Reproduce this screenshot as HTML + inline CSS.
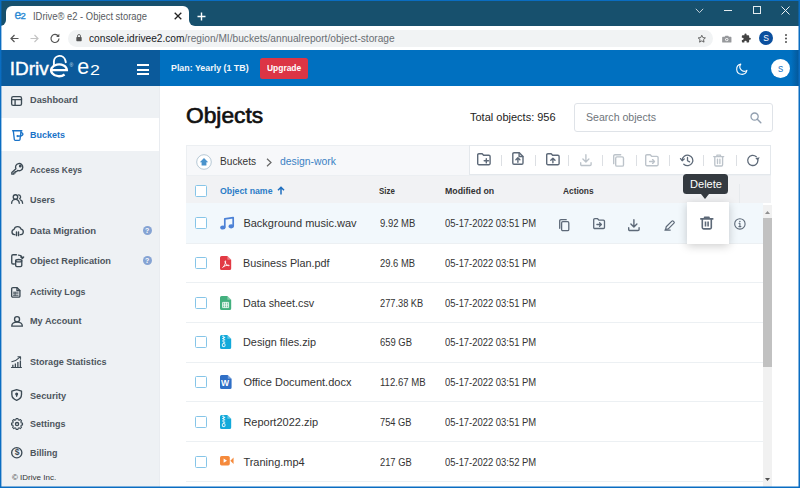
<!DOCTYPE html>
<html><head><meta charset="utf-8"><title>IDrive e2 - Object storage</title>
<style>
*{box-sizing:border-box;margin:0;padding:0}
html,body{width:800px;height:488px;overflow:hidden;background:#fff}
body{position:relative;font-family:"Liberation Sans","DejaVu Sans",sans-serif;color:#333;font-size:12px}
.a{position:absolute}
.t{position:absolute;white-space:pre;line-height:1;transform-origin:0 50%}
svg{position:absolute;overflow:visible}
.cb{position:absolute;left:195px;width:12px;height:12px;border:1px solid #86c5e8;border-radius:1.5px;background:#fff}
.rl{position:absolute;left:186px;width:577px;height:1px;background:#ecf0f3}
.sep{position:absolute;top:155px;width:1px;height:11px;background:#dcdfe3}
.ni{stroke:#3c4a54;stroke-width:1.45;fill:none;stroke-linecap:round;stroke-linejoin:round}
.ti{stroke:#5d6978;stroke-width:1.4;fill:none;stroke-linecap:round;stroke-linejoin:round}
.tg{stroke:#bcc3ca;stroke-width:1.35;fill:none;stroke-linecap:round;stroke-linejoin:round}
</style></head><body>

<!-- browser chrome -->
<div class="a" style="left:0;top:0;width:800px;height:26px;background:#17506d"></div>
<div class="a" style="left:6px;top:5.500px;width:182.500px;height:21.500px;background:#fff;border-radius:6px 6px 0 0"></div>
<div class="a" style="left:0;top:20px;width:6px;height:6px;background:#fff"></div>
<div class="a" style="left:-6px;top:14px;width:12px;height:12px;background:#17506d;border-radius:0 0 6px 0"></div>
<div class="a" style="left:188.500px;top:20px;width:6px;height:6px;background:#fff"></div>
<div class="a" style="left:188.500px;top:14px;width:12px;height:12px;background:#17506d;border-radius:0 0 0 6px"></div>
<div class="t" style="left:14.400px;top:9.400px;font-size:12px;color:#2a8ad4;-webkit-text-stroke:.35px #2a8ad4">e</div><div class="t" style="left:20.600px;top:11.200px;font-size:9.500px;color:#2a8ad4;-webkit-text-stroke:.35px #2a8ad4">2</div>
<svg style="left:174px;top:12px" width="8" height="8" viewBox="0 0 8 8"><path d="M0.7 0.7L7.3 7.3M7.3 0.7L0.7 7.3" stroke="#222" stroke-width="1.3" fill="none"/></svg>
<svg style="left:197px;top:11.5px" width="9" height="9" viewBox="0 0 9 9"><path d="M4.5 0.5V8.5M0.5 4.5H8.5" stroke="#fff" stroke-width="1.4" fill="none"/></svg>
<!-- window controls -->
<svg style="left:695px;top:7.5px" width="9" height="6" viewBox="0 0 9 6"><path d="M0.8 0.8L4.5 4.6L8.2 0.8" stroke="#c5d3dc" stroke-width="1" fill="none"/></svg>
<div class="a" style="left:724px;top:9.500px;width:8px;height:1px;background:#e4ebef"></div>
<div class="a" style="left:753px;top:6px;width:8px;height:8px;border:1px solid #e4ebef"></div>
<svg style="left:781px;top:6px" width="9" height="9" viewBox="0 0 9 9"><path d="M0.500 0.500L8.500 8.500M8.500 0.500L0.500 8.500" stroke="#eef3f6" stroke-width="1" fill="none"/></svg>

<div class="a" style="left:0;top:26px;width:800px;height:24px;background:#fff"></div>
<div class="a" style="left:68px;top:30px;width:644.500px;height:17px;border-radius:8.500px;background:#f1f3f4"></div>
<svg style="left:10px;top:34px" width="9" height="9" viewBox="0 0 9 9"><path d="M8.5 4.5H1M4.5 1L1 4.5L4.5 8" stroke="#555" stroke-width="1.2" fill="none"/></svg>
<svg style="left:30px;top:34px" width="9" height="9" viewBox="0 0 9 9"><path d="M0.5 4.5H8M4.5 1L8 4.5L4.5 8" stroke="#c4c4c4" stroke-width="1.2" fill="none"/></svg>
<svg style="left:50px;top:33px" width="10" height="10" viewBox="0 0 10 10"><path d="M8.3 3.2A4 4 0 1 0 9 5.6" stroke="#555" stroke-width="1.2" fill="none"/><path d="M9.3 0.8V4H6.1Z" fill="#555"/></svg>
<svg style="left:76.200px;top:34.300px" width="6" height="7.500" viewBox="0 0 7 9"><rect x="0.3" y="3.6" width="6.4" height="5" rx="0.8" fill="#555"/><path d="M1.7 4V2.4a1.8 1.8 0 0 1 3.6 0V4" stroke="#555" stroke-width="1" fill="none"/></svg>
<svg style="left:696.700px;top:33.500px" width="9.600" height="9.600" viewBox="0 0 24 24"><path d="M12 3.2l2.7 5.8 6.3.8-4.7 4.3 1.3 6.3L12 17.2 6.4 20.4l1.3-6.3L3 9.8l6.3-.8z" stroke="#444" stroke-width="2" fill="none" stroke-linejoin="round"/></svg>
<svg style="left:721.700px;top:34.600px" width="9.600" height="8" viewBox="0 0 12 10"><path d="M1 2.2h2.3l1-1.4h3.4l1 1.4H11a.8.8 0 0 1 .8.8v5.6a.8.8 0 0 1-.8.8H1a.8.8 0 0 1-.8-.8V3a.8.8 0 0 1 .8-.8z" fill="#97999c"/><circle cx="6" cy="5.7" r="2" fill="#fff"/><circle cx="6" cy="5.7" r="1.1" fill="#97999c"/></svg>
<svg style="left:741.300px;top:33.300px" width="10.300" height="10.300" viewBox="0 0 24 24"><path d="M20.5 11H19V7a2 2 0 0 0-2-2h-4V3.5a2.5 2.5 0 0 0-5 0V5H4a2 2 0 0 0-2 2v3.8h1.5a2.7 2.7 0 0 1 0 5.4H2V20a2 2 0 0 0 2 2h3.8v-1.5a2.7 2.7 0 0 1 5.4 0V22H17a2 2 0 0 0 2-2v-4h1.5a2.5 2.5 0 0 0 0-5z" fill="#444"/></svg>
<div class="a" style="left:759px;top:31px;width:14px;height:14px;border-radius:7px;background:#0b4f9e"></div>
<div class="t" style="left:763.2px;top:33.8px;font-size:8.5px;color:#fff">S</div>
<svg style="left:785.300px;top:33.900px" width="2" height="9" viewBox="0 0 2 9"><circle cx="1" cy="1" r=".95" fill="#444"/><circle cx="1" cy="4.500" r=".95" fill="#444"/><circle cx="1" cy="8" r=".95" fill="#444"/></svg>

<!-- app header -->
<div class="a" style="left:0;top:49.5px;width:160px;height:36.5px;background:#0b5a9b"></div>
<div class="a" style="left:160px;top:49.5px;width:640px;height:36.5px;background:#0070c0"></div>
<div class="a" style="left:791px;top:49.500px;width:9px;height:36.500px;background:linear-gradient(90deg,rgba(9,60,110,0),rgba(9,60,110,.55))"></div>
<div class="t" style="left:9.8px;top:58.6px;font-size:19px;color:#fff;-webkit-text-stroke:0.45px #fff">IDriv</div>
<svg style="left:49px;top:54px" width="21" height="24" viewBox="0 0 21 24"><path d="M4.900 11.500V7.300A5.800 5.800 0 0 1 16.300 6.200L16.800 8.200" stroke="#fff" stroke-width="1.900" fill="none" stroke-linecap="round"/><path d="M2.300 16.200H17.900A7.900 5.900 0 1 0 15.600 20.500" stroke="#fff" stroke-width="2.300" fill="none"/></svg>
<div class="t" style="left:69.5px;top:63px;font-size:5px;color:#cfe0ee">®</div>
<div class="t" style="left:77.3px;top:57.300px;font-size:21.500px;color:#fff">e</div>
<div class="t" style="left:89.8px;top:62px;font-size:15.500px;color:#fff;transform:scaleX(1.150)">2</div>
<div class="a" style="left:137px;top:64px;width:12px;height:2px;background:#fff"></div>
<div class="a" style="left:137px;top:68.5px;width:12px;height:2px;background:#fff"></div>
<div class="a" style="left:137px;top:73px;width:12px;height:2px;background:#fff"></div>
<div class="a" style="left:260px;top:58px;width:48px;height:20.700px;background:#dc3545;border-radius:2.500px"></div>
<svg style="left:736px;top:63.200px" width="12" height="12" viewBox="0 0 13 13"><path d="M5.2 1.2A5.6 5.6 0 1 0 11.8 8 4.8 4.8 0 0 1 5.2 1.2z" stroke="#fff" stroke-width="1.2" fill="none" stroke-linejoin="round"/></svg>
<div class="a" style="left:771px;top:59px;width:19px;height:19px;border-radius:10px;background:#fff"></div>
<div class="t" style="left:778px;top:62.5px;font-size:10.5px;color:#1f78c6">s</div>

<!-- sidebar -->
<div class="a" style="left:0;top:86px;width:160px;height:402px;background:#eef1f4"></div>
<div class="a" style="left:0;top:118.3px;width:160px;height:33.2px;background:#fff"></div>
<div class="a" style="left:159px;top:86px;width:1px;height:402px;background:#e9ecf0"></div>
<svg class="ni" style="left:11.42px;top:95.89px" width="11.16" height="10.23" viewBox="0 0 12 11"><rect x=".7" y=".7" width="10.6" height="9.4" rx="1.6"/><path d="M.7 3.9h10.6M4.4 3.9v6.2"/></svg>
<svg class="ni" style="left:11.76px;top:130.42px;stroke:#1a73c8" width="12.09" height="11.16" viewBox="0 0 13 12"><path d="M.7 .8H10.6M1.4 .8L2.5 10.2a1 1 0 0 0 1 .9H7.6a1 1 0 0 0 1-.9L9.8 .8"/><path d="M9.7 2.9C13 3.2 12.6 6.8 6.3 6.6"/><circle cx="6" cy="6.5" r=".5"/></svg>
<svg class="ni" style="left:11.47px;top:163.44px" width="12.56" height="11.62" viewBox="0 0 13.5 12.5"><path d="M5.3 6.2L.9 10.3V12H3V10.7H4.4V9.3H5.8L7.2 8A3.9 3.9 0 1 0 5.3 6.2Z"/><circle cx="10" cy="3.400" r=".8"/></svg>
<svg class="ni" style="left:11.26px;top:194.37px" width="12.28" height="9.86" viewBox="0 0 13.2 10.6"><circle cx="4.8" cy="3.2" r="2.4"/><path d="M.7 9.9a4.1 4.1 0 0 1 8.2 0"/><path d="M8.1 .9a2.3 2.3 0 0 1 1.2 4.2M10.2 6.4a3.8 3.8 0 0 1 2.3 3.5"/></svg>
<svg class="ni" style="left:11.19px;top:225.58px" width="13.02" height="10.23" viewBox="0 0 14 11"><path d="M4.2 9.3H3.6A2.9 2.9 0 0 1 3.3 3.6 4 4 0 0 1 10.9 3.4 3 3 0 0 1 10.6 9.3H9.8"/><path d="M5.9 6.4v4M8.1 6.4v4" stroke-width="1.5"/></svg>
<svg class="ni" style="left:11.49px;top:254.31px" width="13.02" height="13.49" viewBox="0 0 14 14.5"><path d="M5.8 .8H2.2A1.4 1.4 0 0 0 .8 2.2V9.4a1.4 1.4 0 0 0 1.4 1.4H3.6"/><path d="M5 7.2v5.1c0 1.8 6.6 1.8 6.6 0V7.2"/><ellipse cx="8.3" cy="7.2" rx="3.3" ry="1.3"/><path d="M8 1.2c2.5 0 4 1.200 4.200 3.500M10.600 3.300l1.600 1.600 1.400-1.700"/></svg>
<svg class="ni" style="left:11.37px;top:287.40px" width="9.77" height="10.70" viewBox="0 0 10.5 11.5"><path d="M2 .7H6.600L9.600 3.700V9.600a1.300 1.300 0 0 1-1.300 1.300H2A1.300 1.300 0 0 1 .7 9.600V2A1.300 1.300 0 0 1 2 .7Z"/><path d="M6.400 .9V3.900H9.400"/><path d="M2.600 5.600H7.700M2.600 7.300H7.700M2.600 9H7.700M4.400 5.600V9" stroke-width=".9"/></svg>
<svg class="ni" style="left:11.16px;top:315.71px" width="12.28" height="10.97" viewBox="0 0 13.2 11.8"><circle cx="6.500" cy="3.400" r="2.700"/><path d="M.8 10.900c0-3.100 2.400-4.300 5.700-4.300s5.700 1.200 5.700 4.300Z"/></svg>
<svg class="ni" style="left:11.12px;top:356.26px" width="11.16" height="12.28" viewBox="0 0 12 13.2"><path d="M.5 12.400H11.300" stroke-width="1.100"/><path d="M2 11.800V9.500M4.700 11.800V8M7.400 11.800V6.500M10.100 11.800V4.800" stroke-width="1.400" stroke-linecap="butt"/><path d="M.8 6.100C4.200 5.600 7.300 3.600 10 .9M7.400 .7h2.900v2.900" stroke-width="1.100"/></svg>
<svg class="ni" style="left:11.13px;top:389.45px" width="11.35" height="12.09" viewBox="0 0 12.2 13"><path d="M6.100 .7L11.300 2.300V5.900c0 3.400-2.500 5.300-5.200 6.300C3.400 11.200 .9 9.300 .9 5.900V2.300Z"/><circle cx="6.100" cy="5.300" r=".9" fill="#3c4a54"/><path d="M6.100 5.500V7.800" stroke-width="1.400"/></svg>
<svg class="ni" style="left:10.96px;top:417.65px" width="12.09" height="12.09" viewBox="0 0 13 13"><path d="M12.41 5.47L12.41 7.53L11.05 7.67L10.55 8.89L11.41 9.95L9.95 11.41L8.89 10.55L7.67 11.05L7.53 12.41L5.47 12.41L5.33 11.05L4.11 10.55L3.05 11.41L1.59 9.95L2.45 8.89L1.95 7.67L0.59 7.53L0.59 5.47L1.95 5.33L2.45 4.11L1.59 3.05L3.05 1.59L4.11 2.45L5.33 1.95L5.47 0.59L7.53 0.59L7.67 1.95L8.89 2.45L9.95 1.59L11.41 3.05L10.55 4.11L11.05 5.33Z" stroke-width="1.150"/><circle cx="6.500" cy="6.500" r="1.700"/></svg>
<svg class="ni" style="left:11.23px;top:446.63px" width="11.53" height="11.53" viewBox="0 0 12.4 12.4"><circle cx="6.200" cy="6.200" r="5.500"/></svg>
<div class="t" style="left:14.650px;top:448.200px;font-size:8.500px;font-weight:bold;color:#3c4a54">$</div>
<div class="a" style="left:142.5px;top:225.5px;width:9px;height:9px;border-radius:5px;background:#85a3d3"></div>
<div class="t" style="left:145.1px;top:226.6px;font-size:7px;font-weight:bold;color:#fff">?</div>
<div class="a" style="left:142.5px;top:256.3px;width:9px;height:9px;border-radius:5px;background:#85a3d3"></div>
<div class="t" style="left:145.1px;top:257.4px;font-size:7px;font-weight:bold;color:#fff">?</div>

<!-- main -->
<div class="a" style="left:573.5px;top:103px;width:199px;height:28.5px;border:1px solid #dfe3e8;border-radius:3px;background:#fff"></div>
<svg style="left:750px;top:111.5px" width="12" height="12" viewBox="0 0 12 12"><circle cx="4.6" cy="4.6" r="3.6" stroke="#93a0b0" stroke-width="1.300" fill="none"/><path d="M7.300 7.300L10.800 10.800" stroke="#93a0b0" stroke-width="1.500" stroke-linecap="round"/></svg>

<!-- panel -->
<div class="a" style="left:186px;top:145px;width:585px;height:31px;background:#f7f8fa;border:1px solid #eceff2"></div>
<div class="a" style="left:468.500px;top:145px;width:302.500px;height:30px;background:#fff;border:1px solid #e4e8ec"></div>
<div class="a" style="left:186px;top:175.500px;width:585px;height:27.500px;background:#f1f2f4"></div>
<div class="a" style="left:739px;top:184px;width:1px;height:19px;background:#e7eaed"></div>
<div class="a" style="left:186px;top:203px;width:577px;height:40px;background:#f2f8fc"></div>

<svg style="left:196px;top:154px" width="16" height="16" viewBox="0 0 16 16"><circle cx="8" cy="8" r="7.3" stroke="#b7c9d6" stroke-width="1" fill="#fff"/><path d="M8 4L3.8 8.2H5.6V11.6H10.4V8.2H12.2Z" fill="#4a93cc"/></svg>
<svg style="left:266px;top:157.5px" width="6" height="9" viewBox="0 0 6 9"><path d="M1 0.8L5 4.5L1 8.2" stroke="#666" stroke-width="1.2" fill="none"/></svg>
<svg class="ti" style="left:477.3px;top:152.7px" width="14" height="12.5" viewBox="0 0 14 12.5"><path d="M.7 1.900A1.200 1.200 0 0 1 1.900 .7H5.200L6.600 2.300H11.900A1.200 1.200 0 0 1 13.100 3.500V10.500A1.200 1.200 0 0 1 11.900 11.700H1.900A1.200 1.200 0 0 1 .7 10.500Z"/><path d="M9.300 5.700V9.900M7.200 7.800H11.400"/></svg>
<svg class="ti" style="left:511.5px;top:152.3px" width="12" height="13" viewBox="0 0 12 13"><path d="M2 .7H7.300L11 4.400V11a1.200 1.200 0 0 1-1.200 1.200H2A1.200 1.200 0 0 1 .8 11V1.900A1.200 1.200 0 0 1 2 .7Z"/><path d="M7.100 .9V4.500H10.800"/><path d="M5.900 10.300V5.900M3.900 7.800L5.900 5.800 7.900 7.800"/></svg>
<svg class="ti" style="left:545.5px;top:152.7px" width="14" height="12.5" viewBox="0 0 14 12.5"><path d="M.7 1.900A1.200 1.200 0 0 1 1.900 .7H5.200L6.600 2.300H11.900A1.200 1.200 0 0 1 13.100 3.500V10.500A1.200 1.200 0 0 1 11.900 11.700H1.900A1.200 1.200 0 0 1 .7 10.500Z"/><path d="M6.900 9.800V5.300M4.800 7.300L6.900 5.200 9 7.300"/></svg>
<svg class="tg" style="left:579.5px;top:153.6px" width="11.8" height="12.2" viewBox="0 0 11.8 12.2"><path d="M5.900 .7V7.800M2.900 5L5.900 8 8.900 5"/><path d="M.7 8.800V10.400A1.100 1.100 0 0 0 1.800 11.500H10A1.100 1.100 0 0 0 11.100 10.400V8.800"/></svg>
<svg class="tg" style="left:612.8px;top:154.4px" width="11.2" height="13" viewBox="0 0 11.2 13"><rect x="2.700" y="2.900" width="7.800" height="9.300" rx="1.300"/><path d="M.7 9.700V2A1.300 1.300 0 0 1 2 .7H7.700"/></svg>
<svg class="tg" style="left:645.4px;top:154.2px" width="14" height="12.5" viewBox="0 0 14 12.5"><path d="M.7 1.900A1.200 1.200 0 0 1 1.900 .7H5.200L6.600 2.300H11.900A1.200 1.200 0 0 1 13.100 3.500V10.500A1.200 1.200 0 0 1 11.900 11.700H1.900A1.200 1.200 0 0 1 .7 10.500Z"/><path d="M4.600 7.500H9.400M7.600 5.600L9.500 7.500 7.600 9.400"/></svg>
<svg class="ti" style="left:679.5px;top:154.2px;stroke-width:1.3" width="13.5" height="12.8" viewBox="0 0 13.5 12.8"><path d="M2.200 6.400A5.300 5.300 0 1 1 3.800 10.200" /><path d="M.5 4.600L2.200 6.700 4.200 4.900" /><path d="M7.500 3.500V6.700L9.600 7.900"/></svg>
<svg class="tg" style="left:713px;top:154.2px" width="11.4" height="12.7" viewBox="0 0 11.4 12.7"><path d="M.7 2.600H10.700M3.900 2.400V1.200H7.500V2.400"/><path d="M1.800 2.800V10.800A1.200 1.200 0 0 0 3 12H8.400A1.200 1.200 0 0 0 9.600 10.800V2.800"/><path d="M4.500 5.200V9.600M6.900 5.200V9.600"/></svg>
<svg class="ti" style="left:747.2px;top:154.2px;stroke-width:1.3" width="13.2" height="12.8" viewBox="0 0 13.2 12.8"><path d="M10.900 6.400A5.100 5.100 0 1 1 9.300 2.700"/><path d="M12.700 3.200L11 6.800 8.300 4.300Z" fill="#5d6978" stroke="none"/></svg>
<div class="sep" style="left:501px"></div><div class="sep" style="left:535px"></div><div class="sep" style="left:568px"></div><div class="sep" style="left:602px"></div><div class="sep" style="left:635.5px"></div><div class="sep" style="left:669px"></div><div class="sep" style="left:702.5px"></div><div class="sep" style="left:736px"></div>

<div class="cb" style="top:184.5px"></div>
<svg style="left:277px;top:185.5px" width="8" height="9" viewBox="0 0 8 9"><path d="M4 8.5V1.5M1 4.2L4 1.2L7 4.2" stroke="#1f6fbf" stroke-width="1.5" fill="none"/></svg>

<!-- rows -->
<div class="cb" style="top:217px"></div>
<div class="rl" style="top:243px"></div>
<div class="cb" style="top:256.8px"></div>
<div class="rl" style="top:282px"></div>
<div class="cb" style="top:296.5px"></div>
<div class="rl" style="top:322px"></div>
<div class="cb" style="top:336.2px"></div>
<div class="rl" style="top:362px"></div>
<div class="cb" style="top:376px"></div>
<div class="rl" style="top:401px"></div>
<div class="cb" style="top:415.7px"></div>
<div class="rl" style="top:441px"></div>
<div class="cb" style="top:455.5px"></div>
<div class="rl" style="top:481px"></div>
<svg style="left:219.6px;top:216.9px" width="14.8" height="13.4" viewBox="0 0 14.8 13.4"><path d="M4.800 10.200V1.800L13.200 .6V9" stroke="#4d82d6" stroke-width="1.700" fill="none" stroke-linejoin="round"/><ellipse cx="2.900" cy="10.500" rx="2.700" ry="2.100" fill="#4d82d6"/><ellipse cx="11.300" cy="9.300" rx="2.700" ry="2.100" fill="#4d82d6"/></svg>
<svg style="left:220.1px;top:256px" width="11.2" height="14" viewBox="0 0 11.2 14"><path d="M1.600 0H7.400L11.200 3.800V12.400A1.600 1.600 0 0 1 9.600 14H1.600A1.600 1.600 0 0 1 0 12.400V1.600A1.600 1.600 0 0 1 1.600 0Z" fill="#e23a44"/><path d="M7.400 0V3.800H11.200Z" fill="#fff" fill-opacity=".35"/><path d="M2.600 11.400C4.200 10.400 5.400 8.200 5.600 5.400 5.700 4.600 4.900 4.600 5 5.400 5.300 7.800 7 9.400 8.800 9.800 9.500 9.900 9.400 9.200 8.700 9.200 6.500 9.200 4 10 2.600 11.400Z" stroke="#fff" stroke-width=".9" fill="none" stroke-linejoin="round"/></svg>
<svg style="left:220.1px;top:295.7px" width="11.2" height="14" viewBox="0 0 11.2 14"><path d="M1.600 0H7.400L11.200 3.800V12.400A1.600 1.600 0 0 1 9.600 14H1.600A1.600 1.600 0 0 1 0 12.400V1.600A1.600 1.600 0 0 1 1.600 0Z" fill="#43b07e"/><path d="M7.400 0V3.800H11.200Z" fill="#fff" fill-opacity=".35"/><path d="M2.600 6.400H8.600V11.600H2.600ZM2.600 8.100H8.600M2.600 9.800H8.600M4.600 6.400V11.600M6.600 6.400V11.600" stroke="#fff" stroke-width=".8" fill="none"/></svg>
<svg style="left:220px;top:335.2px" width="11.2" height="14" viewBox="0 0 11.2 14"><path d="M1.600 0H7.400L11.200 3.800V12.400A1.600 1.600 0 0 1 9.600 14H1.600A1.600 1.600 0 0 1 0 12.400V1.600A1.600 1.600 0 0 1 1.600 0Z" fill="#12a9da"/><path d="M7.400 0V3.800H11.200Z" fill="#fff" fill-opacity=".35"/><path d="M2.200 1.200H4.200M3.200 2.400H5.200M2.200 3.600H4.200M3.200 4.800H5.200M2.200 6H4.200M3.200 7.200H5.200" stroke="#fff" stroke-width="1"/><rect x="2.400" y="8.600" width="2.600" height="3" rx=".6" stroke="#fff" stroke-width=".9" fill="none"/></svg>
<svg style="left:219.9px;top:374.9px" width="11.6" height="14" viewBox="0 0 11.6 14"><path d="M1.600 0H7.800L11.600 3.800V12.400A1.600 1.600 0 0 1 10 14H1.600A1.600 1.600 0 0 1 0 12.400V1.600A1.600 1.600 0 0 1 1.600 0Z" fill="#2f6fc6"/><path d="M7.800 0V3.800H11.600Z" fill="#fff" fill-opacity=".35"/></svg>
<svg style="left:220px;top:415.1px" width="11.2" height="14" viewBox="0 0 11.2 14"><path d="M1.600 0H7.400L11.200 3.800V12.400A1.600 1.600 0 0 1 9.600 14H1.600A1.600 1.600 0 0 1 0 12.400V1.600A1.600 1.600 0 0 1 1.600 0Z" fill="#12a9da"/><path d="M7.400 0V3.800H11.200Z" fill="#fff" fill-opacity=".35"/><path d="M2.200 1.200H4.200M3.200 2.400H5.200M2.200 3.600H4.200M3.200 4.800H5.200M2.200 6H4.200M3.200 7.200H5.200" stroke="#fff" stroke-width="1"/><rect x="2.400" y="8.600" width="2.600" height="3" rx=".6" stroke="#fff" stroke-width=".9" fill="none"/></svg>
<svg style="left:219.8px;top:456.3px" width="13.6" height="9.4" viewBox="0 0 13.6 9.4"><rect x="0" y="0" width="9.800" height="9.400" rx="1.600" fill="#f58a3c"/><path d="M10.300 4.700L13.600 1.400V8Z" fill="#f58a3c"/><path d="M3.600 2.600L7 4.700 3.600 6.800Z" fill="#fff"/></svg>
<div class="t" style="left:221.200px;top:379.200px;font-size:9px;font-weight:bold;color:#fff;transform:scaleX(.95)">W</div>

<!-- scrollbar -->
<div class="a" style="left:763.400px;top:205px;width:9px;height:282px;background:#f1f1f1"></div>
<div class="a" style="left:763.400px;top:218px;width:9px;height:148.500px;background:#c1c1c1"></div>
<svg style="left:765.400px;top:211px" width="5" height="3" viewBox="0 0 5 3"><path d="M0 3L2.500 0L5 3Z" fill="#8f8f8f"/></svg>
<svg style="left:765.400px;top:478px" width="5" height="3" viewBox="0 0 5 3"><path d="M0 0L2.500 3L5 0Z" fill="#505050"/></svg>

<!-- tooltip & raised -->
<div class="a" style="left:687.2px;top:202px;width:41.6px;height:41.8px;background:#fff;box-shadow:0 2px 9px rgba(0,0,0,.2)"></div>
<div class="a" style="left:683px;top:174.2px;width:45.2px;height:19.6px;background:#343a40;border-radius:3.5px"></div>
<div class="a" style="left:701px;top:193.5px;width:0;height:0;border-left:4.5px solid transparent;border-right:4.5px solid transparent;border-top:5px solid #343a40"></div>
<svg class="ti" style="left:558.6px;top:219px;stroke-width:1.300" width="10.5" height="12.4" viewBox="0 0 10.5 12.4"><rect x="2.600" y="2.700" width="7.200" height="9" rx="1.200"/><path d="M.7 9.300V1.900A1.200 1.200 0 0 1 1.900 .7H7.200"/></svg>
<svg class="ti" style="left:593.2px;top:218.4px;stroke-width:1.300" width="12.2" height="11.2" viewBox="0 0 12.2 11.2"><path d="M.7 1.800A1.100 1.100 0 0 1 1.800 .7H4.600L5.900 2.100H10.400A1.100 1.100 0 0 1 11.500 3.200V9.400A1.100 1.100 0 0 1 10.400 10.500H1.800A1.100 1.100 0 0 1 .7 9.400Z"/><path d="M3.900 6.500H8.300M6.600 4.800L8.400 6.500 6.600 8.200"/></svg>
<svg class="ti" style="left:628.2px;top:219px;stroke-width:1.400" width="11.8" height="12.2" viewBox="0 0 11.8 12.2"><path d="M5.900 .7V7.800M2.900 5L5.900 8 8.900 5"/><path d="M.7 8.800V10.400A1.100 1.100 0 0 0 1.800 11.500H10A1.100 1.100 0 0 0 11.100 10.400V8.800"/></svg>
<svg class="ti" style="left:663.5px;top:219.7px;stroke-width:1.200" width="11.4" height="10.8" viewBox="0 0 11.4 10.8"><path d="M2.200 6.800L7.900 1.100a1 1 0 0 1 1.400 0l.7.700a1 1 0 0 1 0 1.400L4.300 8.900 1.600 9.500Z"/><path d="M.9 10.100H6.200" stroke-width="1.400"/></svg>
<svg class="ti" style="left:700.4px;top:216px;stroke-width:1.600" width="13.6" height="13.8" viewBox="0 0 13.6 13.8"><path d="M.8 2.900H12.800M4.600 2.700V1.200H9V2.700"/><path d="M2.300 3.100V11.600A1.300 1.300 0 0 0 3.600 12.900H10A1.300 1.300 0 0 0 11.300 11.600V3.100"/><path d="M5.500 5.600V10.400M8.100 5.600V10.400" stroke-linecap="butt" stroke-width="1.600"/></svg>
<svg class="ti" style="left:733.7px;top:217.9px;stroke-width:1.100" width="11.8" height="11.8" viewBox="0 0 11.8 11.8"><circle cx="5.900" cy="5.900" r="5.200"/><path d="M5.900 5.300V8.500M4.900 8.600H6.900M5 5.300H5.900" stroke-width="1.100"/><circle cx="5.900" cy="3.400" r=".75" fill="#5d6978" stroke="none"/></svg>

<div class="t" style="left:33px;top:10.5px;font-size:11px;color:#575b60;transform:scaleX(0.854);">IDrive® e2 - Object storage</div>
<div class="t" style="left:170.6px;top:64.0px;font-size:9.2px;color:#f1f6fb;font-weight:bold;transform:scaleX(0.964);">Plan: Yearly (1 TB)</div>
<div class="t" style="left:267px;top:63.9px;font-size:9.2px;color:#fff;font-weight:bold;transform:scaleX(0.917);">Upgrade</div>
<div class="t" style="left:30px;top:95.2px;font-size:9.7px;color:#4d555d;font-weight:bold;transform:scaleX(0.948);">Dashboard</div>
<div class="t" style="left:30px;top:129.7px;font-size:9.7px;color:#1a73c8;font-weight:bold;transform:scaleX(0.928);">Buckets</div>
<div class="t" style="left:30px;top:165.0px;font-size:9.7px;color:#4d555d;font-weight:bold;transform:scaleX(0.870);">Access Keys</div>
<div class="t" style="left:30px;top:194.7px;font-size:9.7px;color:#4d555d;font-weight:bold;transform:scaleX(0.928);">Users</div>
<div class="t" style="left:30px;top:225.8px;font-size:9.7px;color:#4d555d;font-weight:bold;transform:scaleX(0.981);">Data Migration</div>
<div class="t" style="left:30px;top:255.8px;font-size:9.7px;color:#4d555d;font-weight:bold;transform:scaleX(0.952);">Object Replication</div>
<div class="t" style="left:30px;top:287.1px;font-size:9.7px;color:#4d555d;font-weight:bold;transform:scaleX(0.912);">Activity Logs</div>
<div class="t" style="left:30px;top:315.9px;font-size:9.7px;color:#4d555d;font-weight:bold;transform:scaleX(0.944);">My Account</div>
<div class="t" style="left:30px;top:357.1px;font-size:9.7px;color:#4d555d;font-weight:bold;transform:scaleX(0.935);">Storage Statistics</div>
<div class="t" style="left:30px;top:390.5px;font-size:9.7px;color:#4d555d;font-weight:bold;transform:scaleX(0.947);">Security</div>
<div class="t" style="left:30px;top:418.8px;font-size:9.7px;color:#4d555d;font-weight:bold;transform:scaleX(0.929);">Settings</div>
<div class="t" style="left:30px;top:447.8px;font-size:9.7px;color:#4d555d;font-weight:bold;transform:scaleX(0.925);">Billing</div>
<div class="t" style="left:12px;top:473.6px;font-size:8px;color:#333;">© IDrive Inc.</div>
<div class="t" style="left:186.3px;top:105.8px;font-size:21.3px;color:#111;transform:scaleX(1.069);-webkit-text-stroke:0.65px #111;">Objects</div>
<div class="t" style="left:470px;top:111.5px;font-size:11px;color:#222;">Total objects: 956</div>
<div class="t" style="left:585.8px;top:111.7px;font-size:11.5px;color:#6f757b;transform:scaleX(0.920);">Search objects</div>
<div class="t" style="left:219.5px;top:155.8px;font-size:11px;color:#333;transform:scaleX(0.920);">Buckets</div>
<div class="t" style="left:280px;top:155.8px;font-size:11px;color:#3b82c4;transform:scaleX(0.944);">design-work</div>
<div class="t" style="left:219.5px;top:185.6px;font-size:9.5px;color:#2a7cc7;font-weight:bold;transform:scaleX(0.921);">Object name</div>
<div class="t" style="left:378.8px;top:185.6px;font-size:9.5px;color:#333;font-weight:bold;transform:scaleX(0.831);">Size</div>
<div class="t" style="left:444.8px;top:185.6px;font-size:9.5px;color:#333;font-weight:bold;transform:scaleX(0.923);">Modified on</div>
<div class="t" style="left:562.8px;top:185.6px;font-size:9.5px;color:#333;font-weight:bold;transform:scaleX(0.878);">Actions</div>
<div class="t" style="left:243.4px;top:217.7px;font-size:11px;color:#333;">Background music.wav</div>
<div class="t" style="left:379.5px;top:218.8px;font-size:10px;color:#333;transform:scaleX(0.948);">9.92 MB</div>
<div class="t" style="left:445px;top:218.8px;font-size:10px;color:#333;transform:scaleX(0.943);">05-17-2022 03:51 PM</div>
<div class="t" style="left:243.4px;top:257.8px;font-size:11px;color:#333;transform:scaleX(0.983);">Business Plan.pdf</div>
<div class="t" style="left:379.5px;top:258.9px;font-size:10px;color:#333;transform:scaleX(0.940);">29.6 MB</div>
<div class="t" style="left:445px;top:258.9px;font-size:10px;color:#333;transform:scaleX(0.943);">05-17-2022 03:51 PM</div>
<div class="t" style="left:243.4px;top:297.6px;font-size:11px;color:#333;transform:scaleX(0.978);">Data sheet.csv</div>
<div class="t" style="left:379.5px;top:298.7px;font-size:10px;color:#333;transform:scaleX(0.925);">277.38 KB</div>
<div class="t" style="left:445px;top:298.7px;font-size:10px;color:#333;transform:scaleX(0.943);">05-17-2022 03:51 PM</div>
<div class="t" style="left:243.4px;top:337.3px;font-size:11px;color:#333;transform:scaleX(0.987);">Design files.zip</div>
<div class="t" style="left:379.5px;top:338.4px;font-size:10px;color:#333;transform:scaleX(0.943);">659 GB</div>
<div class="t" style="left:445px;top:338.4px;font-size:10px;color:#333;transform:scaleX(0.943);">05-17-2022 03:51 PM</div>
<div class="t" style="left:243.4px;top:377.2px;font-size:11px;color:#333;">Office Document.docx</div>
<div class="t" style="left:379.5px;top:378.3px;font-size:10px;color:#333;transform:scaleX(0.957);">112.67 MB</div>
<div class="t" style="left:445px;top:378.3px;font-size:10px;color:#333;transform:scaleX(0.943);">05-17-2022 03:51 PM</div>
<div class="t" style="left:243.4px;top:417.1px;font-size:11px;color:#333;">Report2022.zip</div>
<div class="t" style="left:379.5px;top:418.2px;font-size:10px;color:#333;transform:scaleX(0.929);">754 GB</div>
<div class="t" style="left:445px;top:418.2px;font-size:10px;color:#333;transform:scaleX(0.943);">05-17-2022 03:51 PM</div>
<div class="t" style="left:243.4px;top:456.5px;font-size:11px;color:#333;">Traning.mp4</div>
<div class="t" style="left:379.5px;top:457.6px;font-size:10px;color:#333;transform:scaleX(0.932);">217 GB</div>
<div class="t" style="left:445px;top:457.6px;font-size:10px;color:#333;transform:scaleX(0.943);">05-17-2022 03:52 PM</div>
<div class="t" style="left:689.8px;top:178.7px;font-size:11.3px;color:#fff;transform:scaleX(0.980);">Delete</div>
<div class="t" style="left:89.4px;top:32.5px;font-size:11px;color:#202124;transform:scaleX(0.924)">console.idrivee2.com<span style="color:#6a6e73">/region/MI/buckets/annualreport/object-storage</span></div>

<!-- window border -->
<div class="a" style="left:0;top:0;width:800px;height:1px;background:#0a6dc2"></div>
<div class="a" style="left:0;top:0;width:2px;height:488px;background:linear-gradient(90deg,#0a6dc2 50%,rgba(10,109,194,.4) 50%)"></div>
<div class="a" style="left:798px;top:0;width:2px;height:488px;background:linear-gradient(270deg,#0a6dc2 50%,rgba(10,109,194,.5) 50%)"></div>
<div class="a" style="left:0;top:486px;width:800px;height:2px;background:linear-gradient(0deg,#0a6dc2 50%,rgba(10,109,194,.5) 50%)"></div>
</body></html>
